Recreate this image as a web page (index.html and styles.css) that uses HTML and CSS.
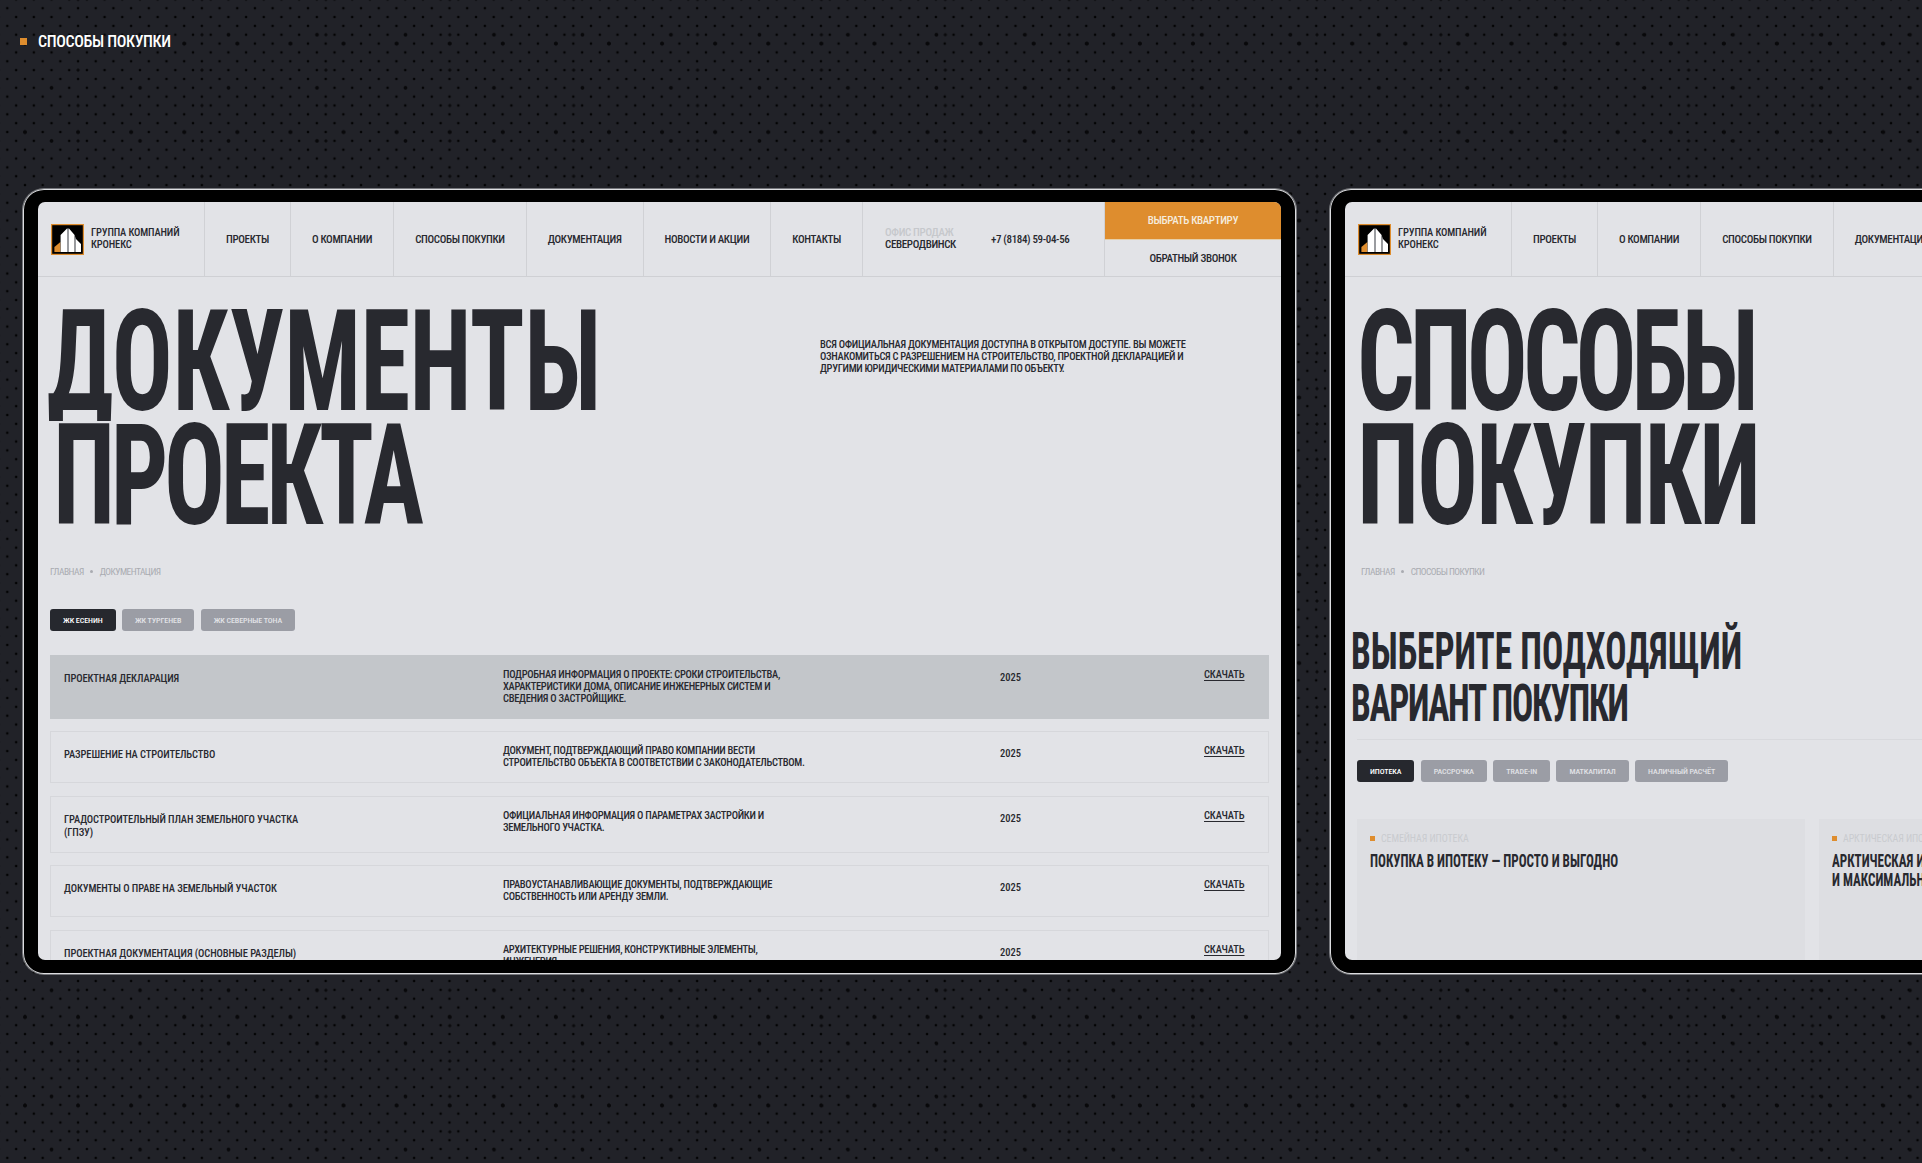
FILE: index.html
```html
<!DOCTYPE html>
<html lang="ru">
<head>
    <meta charset="UTF-8">
    <title>Способы покупки</title>
    <link rel="stylesheet" href="styles.css">
</head>
<body>
    <div class="section-label"><span class="square"></span>СПОСОБЫ ПОКУПКИ</div>

    <div class="frames">
        <div class="frame">
            <div class="screen">
                <header class="site-header">
                    <div class="logo-cell">
                        <svg class="logo" viewBox="0 0 33 31">
                            <rect x=".6" y=".6" width="31.8" height="29.8" fill="#000" stroke="#de8d2e" stroke-width="1.2"/>
                            <path d="M3.4 28v-5l6-5v10z" fill="#de8d2e"/>
                            <path d="M9.6 28V11l6.4-6.4V28zM18 28V4.6l5.6 6.4v17zM25 28V15l5 5v8z" fill="#fff"/>
                            <path d="M16 28V4.6h2V28zM23.6 28V11l1.4 4v13z" fill="#9a9ca0"/>
                        </svg>
                        <div class="logo-text">ГРУППА КОМПАНИЙ<br>КРОНЕКС</div>
                    </div>
                    <a class="nav-item" href="#">ПРОЕКТЫ</a>
                    <a class="nav-item" href="#">О КОМПАНИИ</a>
                    <a class="nav-item" href="#">СПОСОБЫ ПОКУПКИ</a>
                    <a class="nav-item" href="#">ДОКУМЕНТАЦИЯ</a>
                    <a class="nav-item" href="#">НОВОСТИ И АКЦИИ</a>
                    <a class="nav-item" href="#">КОНТАКТЫ</a>
                    <div class="office">
                        <div class="office-name"><span>ОФИС ПРОДАЖ</span><br>СЕВЕРОДВИНСК</div>
                        <div class="phone">+7 (8184) 59-04-56</div>
                    </div>
                    <div class="cta">
                        <a class="cta-main" href="#">ВЫБРАТЬ КВАРТИРУ</a>
                        <a class="cta-second" href="#">ОБРАТНЫЙ ЗВОНОК</a>
                    </div>
                </header>
                <div class="content">
                    <div class="hero">
                        <h1 class="hero-title">
                            <span class="line-docs">ДОКУМЕНТЫ</span>
                            <span class="line-project">ПРОЕКТА</span>
                        </h1>
                        <p class="hero-text">ВСЯ ОФИЦИАЛЬНАЯ ДОКУМЕНТАЦИЯ ДОСТУПНА В ОТКРЫТОМ ДОСТУПЕ. ВЫ МОЖЕТЕ<br>ОЗНАКОМИТЬСЯ С РАЗРЕШЕНИЕМ НА СТРОИТЕЛЬСТВО, ПРОЕКТНОЙ ДЕКЛАРАЦИЕЙ И<br>ДРУГИМИ ЮРИДИЧЕСКИМИ МАТЕРИАЛАМИ ПО ОБЪЕКТУ.</p>
                    </div>
                    <div class="crumbs"><span>ГЛАВНАЯ</span><i></i><span>ДОКУМЕНТАЦИЯ</span></div>
                    <div class="tabs docs-tabs">
                        <a class="tab active" href="#">ЖК ЕСЕНИН</a>
                        <a class="tab" href="#">ЖК ТУРГЕНЕВ</a>
                        <a class="tab" href="#">ЖК СЕВЕРНЫЕ ТОНА</a>
                    </div>
                    <div class="doc-list">
                        <div class="doc-row current">
                            <div class="doc-name">ПРОЕКТНАЯ ДЕКЛАРАЦИЯ</div>
                            <div class="doc-desc">ПОДРОБНАЯ ИНФОРМАЦИЯ О ПРОЕКТЕ: СРОКИ СТРОИТЕЛЬСТВА,<br>ХАРАКТЕРИСТИКИ ДОМА, ОПИСАНИЕ ИНЖЕНЕРНЫХ СИСТЕМ И<br>СВЕДЕНИЯ О ЗАСТРОЙЩИКЕ.</div>
                            <div class="doc-year">2025</div>
                            <a class="doc-link" href="#">СКАЧАТЬ</a>
                        </div>
                        <div class="doc-row">
                            <div class="doc-name">РАЗРЕШЕНИЕ НА СТРОИТЕЛЬСТВО</div>
                            <div class="doc-desc">ДОКУМЕНТ, ПОДТВЕРЖДАЮЩИЙ ПРАВО КОМПАНИИ ВЕСТИ<br>СТРОИТЕЛЬСТВО ОБЪЕКТА В СООТВЕТСТВИИ С ЗАКОНОДАТЕЛЬСТВОМ.</div>
                            <div class="doc-year">2025</div>
                            <a class="doc-link" href="#">СКАЧАТЬ</a>
                        </div>
                        <div class="doc-row">
                            <div class="doc-name">ГРАДОСТРОИТЕЛЬНЫЙ ПЛАН ЗЕМЕЛЬНОГО УЧАСТКА<br>(ГПЗУ)</div>
                            <div class="doc-desc">ОФИЦИАЛЬНАЯ ИНФОРМАЦИЯ О ПАРАМЕТРАХ ЗАСТРОЙКИ И<br>ЗЕМЕЛЬНОГО УЧАСТКА.</div>
                            <div class="doc-year">2025</div>
                            <a class="doc-link" href="#">СКАЧАТЬ</a>
                        </div>
                        <div class="doc-row">
                            <div class="doc-name">ДОКУМЕНТЫ О ПРАВЕ НА ЗЕМЕЛЬНЫЙ УЧАСТОК</div>
                            <div class="doc-desc">ПРАВОУСТАНАВЛИВАЮЩИЕ ДОКУМЕНТЫ, ПОДТВЕРЖДАЮЩИЕ<br>СОБСТВЕННОСТЬ ИЛИ АРЕНДУ ЗЕМЛИ.</div>
                            <div class="doc-year">2025</div>
                            <a class="doc-link" href="#">СКАЧАТЬ</a>
                        </div>
                        <div class="doc-row">
                            <div class="doc-name">ПРОЕКТНАЯ ДОКУМЕНТАЦИЯ (ОСНОВНЫЕ РАЗДЕЛЫ)</div>
                            <div class="doc-desc">АРХИТЕКТУРНЫЕ РЕШЕНИЯ, КОНСТРУКТИВНЫЕ ЭЛЕМЕНТЫ,<br>ИНЖЕНЕРИЯ.</div>
                            <div class="doc-year">2025</div>
                            <a class="doc-link" href="#">СКАЧАТЬ</a>
                        </div>
                    </div>
                </div>
            </div>
        </div>

        <div class="frame">
            <div class="screen">
                <header class="site-header">
                    <div class="logo-cell">
                        <svg class="logo" viewBox="0 0 33 31">
                            <rect x=".6" y=".6" width="31.8" height="29.8" fill="#000" stroke="#de8d2e" stroke-width="1.2"/>
                            <path d="M3.4 28v-5l6-5v10z" fill="#de8d2e"/>
                            <path d="M9.6 28V11l6.4-6.4V28zM18 28V4.6l5.6 6.4v17zM25 28V15l5 5v8z" fill="#fff"/>
                            <path d="M16 28V4.6h2V28zM23.6 28V11l1.4 4v13z" fill="#9a9ca0"/>
                        </svg>
                        <div class="logo-text">ГРУППА КОМПАНИЙ<br>КРОНЕКС</div>
                    </div>
                    <a class="nav-item" href="#">ПРОЕКТЫ</a>
                    <a class="nav-item" href="#">О КОМПАНИИ</a>
                    <a class="nav-item" href="#">СПОСОБЫ ПОКУПКИ</a>
                    <a class="nav-item" href="#">ДОКУМЕНТАЦИЯ</a>
                    <a class="nav-item" href="#">НОВОСТИ И АКЦИИ</a>
                    <a class="nav-item" href="#">КОНТАКТЫ</a>
                    <div class="office">
                        <div class="office-name"><span>ОФИС ПРОДАЖ</span><br>СЕВЕРОДВИНСК</div>
                        <div class="phone">+7 (8184) 59-04-56</div>
                    </div>
                    <div class="cta">
                        <a class="cta-main" href="#">ВЫБРАТЬ КВАРТИРУ</a>
                        <a class="cta-second" href="#">ОБРАТНЫЙ ЗВОНОК</a>
                    </div>
                </header>
                <div class="content">
                    <div class="hero">
                        <h1 class="hero-title">
                            <span class="line-ways">СПОСОБЫ</span>
                            <span class="line-buy">ПОКУПКИ</span>
                        </h1>
                    </div>
                    <div class="crumbs crumbs-inset"><span>ГЛАВНАЯ</span><i></i><span>СПОСОБЫ ПОКУПКИ</span></div>
                    <h2 class="pick-title">
                        <span>ВЫБЕРИТЕ ПОДХОДЯЩИЙ</span>
                        <span class="line-variant">ВАРИАНТ ПОКУПКИ</span>
                    </h2>
                    <div class="pick-line"></div>
                    <div class="tabs buy-tabs">
                        <a class="tab active" href="#">ИПОТЕКА</a>
                        <a class="tab" href="#">РАССРОЧКА</a>
                        <a class="tab" href="#">TRADE-IN</a>
                        <a class="tab" href="#">МАТКАПИТАЛ</a>
                        <a class="tab" href="#">НАЛИЧНЫЙ РАСЧЁТ</a>
                    </div>
                    <div class="cards">
                        <div class="card">
                            <div class="card-label"><span class="card-square"></span>СЕМЕЙНАЯ ИПОТЕКА</div>
                            <div class="card-title">ПОКУПКА В ИПОТЕКУ — ПРОСТО И ВЫГОДНО</div>
                        </div>
                        <div class="card">
                            <div class="card-label"><span class="card-square"></span>АРКТИЧЕСКАЯ ИПОТЕКА</div>
                            <div class="card-title">АРКТИЧЕСКАЯ ИПОТЕКА — ВЫГОДНАЯ СТАВКА<br>И МАКСИМАЛЬНАЯ ПОДДЕРЖКА</div>
                        </div>
                    </div>
                </div>
            </div>
        </div>
    </div>
</body>
</html>
```
FILE: styles.css
```css
html, body {
    margin: 0;
    padding: 0;
}
body {
    width: 1922px;
    height: 1163px;
    overflow: hidden;
    background-color: #212228;
    background-image:
        radial-gradient(circle, #08080a 0, #08080a 1.5px, transparent 2.4px),
        radial-gradient(circle, #08080a 0, #08080a 1.3px, transparent 2.2px),
        radial-gradient(circle, #0a0a0c 0, #0a0a0c 1.1px, transparent 2px),
        radial-gradient(circle, rgba(0, 0, 0, 0.9) 0, rgba(0, 0, 0, 0.9) 0.8px, transparent 1.7px),
        radial-gradient(circle, rgba(0, 0, 0, 0.9) 0, rgba(0, 0, 0, 0.9) 0.8px, transparent 1.7px);
    background-size: 53.1px 88.5px, 88.5px 53.1px, 123.9px 35.4px, 17.7px 17.7px, 17.7px 17.7px;
    background-position: -1.55px -0.65px, 7.3px 8.2px, 16.15px 17.05px, -1.55px -0.65px, 7.3px 8.2px;
    font-family: Roboto, sans-serif;
    font-stretch: 75%;
    color: #28292f;
}
a {
    color: inherit;
    text-decoration: none;
}

.section-label {
    display: flex;
    align-items: center;
    height: 19px;
    padding: 32px 0 0 20px;
    font-size: 16px;
    letter-spacing: -0.35px;
    line-height: 19px;
    font-weight: 500;
    color: #fff;
}
.square {
    width: 7px;
    height: 7px;
    margin-right: 11px;
    background: #de8d2e;
}

.frames {
    display: flex;
    gap: 32px;
    padding: 137px 0 0 22px;
}
.frame {
    flex: none;
    box-sizing: border-box;
    width: 1275px;
    height: 787px;
    padding: 13px 15px;
    background: #000;
    background-clip: padding-box;
    border: 1px solid rgba(220, 221, 224, 0.45);
    border-radius: 22px;
    box-shadow: inset 0 0 0 1px #dcdde0;
}
.screen {
    height: 758px;
    overflow: hidden;
    background: #e2e3e7;
    border-radius: 7px;
}

/* шапка */
.site-header {
    display: flex;
    height: 74px;
    border-bottom: 1px solid #cfd0d4;
    font-size: 11px;
    letter-spacing: -0.35px;
    font-weight: 500;
}
.logo-cell {
    display: flex;
    align-items: center;
    box-sizing: border-box;
    width: 167px;
    padding-left: 13px;
    border-right: 1px solid #d0d1d5;
}
.logo {
    flex: none;
    width: 33px;
    height: 31px;
    margin-right: 7px;
}
.logo-text {
    font-size: 10.5px;
    line-height: 12px;
    letter-spacing: -0.13px;
}
.nav-item {
    display: flex;
    align-items: center;
    padding: 0 21px;
    border-right: 1px solid #d0d1d5;
}
.office {
    display: flex;
    align-items: center;
    box-sizing: border-box;
    width: 242px;
    padding-left: 22px;
    border-right: 1px solid #d0d1d5;
}
.office-name {
    width: 106px;
    line-height: 12px;
}
.office-name span {
    color: #c6c8cc;
}
.cta {
    display: flex;
    flex-direction: column;
    flex: 1;
}
.cta-main {
    display: flex;
    align-items: center;
    justify-content: center;
    height: 37px;
    background: #de8d2e;
    color: #f5ebdd;
    border-bottom: 1px solid #e6cfa8;
}
.cta-second {
    display: flex;
    align-items: center;
    justify-content: center;
    flex: 1;
}

/* контент */
.content {
    padding: 0 12px;
}
.hero {
    display: grid;
    grid-template-columns: 770px 1fr;
    height: 289px;
}
.hero-title {
    margin: 28px 0 0;
    font-size: 140.6px;
    line-height: 114px;
    font-weight: 700;
    white-space: nowrap;
    transform: scaleX(0.72);
    transform-origin: left top;
}
.hero-title span,
.pick-title span {
    display: block;
}
/* хвосты Д короче, чем в Roboto */
.line-docs {
    height: 116px;
    overflow: hidden;
    margin: 0 0 -2px -4px;
    letter-spacing: -0.7px;
}
.line-project {
    margin-left: 4px;
    letter-spacing: -6px;
}
.line-ways {
    letter-spacing: -7px;
}
.line-buy {
    letter-spacing: -3px;
}
.hero-text {
    margin: 62px 0 0;
    font-size: 10.5px;
    letter-spacing: -0.3px;
    line-height: 12px;
    font-weight: 500;
}
.crumbs {
    display: flex;
    align-items: center;
    height: 10px;
    padding-bottom: 2px;
    font-size: 9.5px;
    letter-spacing: -0.55px;
    color: #a9abb1;
}
.crumbs-inset {
    padding-left: 4px;
}
.crumbs i {
    width: 3px;
    height: 3px;
    margin: 0 6.5px;
    border-radius: 50%;
    background: #a9abb1;
}

.tabs {
    display: flex;
    gap: 6.4px;
}
.tab {
    display: flex;
    align-items: center;
    height: 22px;
    padding: 0 13px;
    border-radius: 3px;
    background: #9b9da5;
    color: #e2e3e7;
    font-size: 8px;
    letter-spacing: -0.08px;
    font-weight: 500;
}
.tab.active {
    background: #26282e;
    color: #fff;
}
.docs-tabs {
    margin-top: 31px;
}

.doc-list {
    margin-top: 24px;
}
.doc-row {
    display: grid;
    grid-template-columns: 439px 497px 204px auto;
    padding: 13px;
    margin-bottom: 12.4px;
    border: 1px solid #d6d7db;
    font-size: 10.5px;
    line-height: 12px;
    font-weight: 500;
}
.doc-row.current {
    background: #c3c6ca;
    border-color: #c3c6ca;
}
.doc-name {
    padding-top: 3px;
    line-height: 13px;
    letter-spacing: -0.1px;
}
.doc-desc {
    letter-spacing: -0.3px;
}
.doc-year {
    padding-top: 3px;
}
.doc-link {
    align-self: start;
    justify-self: start;
    letter-spacing: -0.1px;
    text-decoration: underline;
    text-underline-offset: 2px;
}

/* способы покупки */
.pick-title {
    margin: 48px 0 0 -6px;
    font-size: 52px;
    line-height: 52px;
    font-weight: 700;
    white-space: nowrap;
    transform: scaleX(0.68);
    transform-origin: left top;
}
.line-variant {
    letter-spacing: -2px;
}
.pick-line {
    height: 1px;
    margin-top: 9px;
    background: #d8d9dd;
}
.buy-tabs {
    margin-top: 20px;
}
.cards {
    display: flex;
    gap: 14px;
    margin-top: 37px;
}
.card {
    flex: none;
    box-sizing: border-box;
    width: 448px;
    height: 200px;
    padding: 13px 13px 0;
    background: #dddee2;
}
.card-label {
    display: flex;
    align-items: center;
    height: 12px;
    font-size: 10px;
    letter-spacing: -0.1px;
    color: #c9cbcf;
}
.card-square {
    width: 5px;
    height: 5px;
    margin-right: 6px;
    background: #de8d2e;
}
.card-title {
    margin-top: 8px;
    font-size: 18.7px;
    line-height: 19px;
    font-weight: 700;
    white-space: nowrap;
    transform: scaleX(0.7);
    transform-origin: left top;
}
```
